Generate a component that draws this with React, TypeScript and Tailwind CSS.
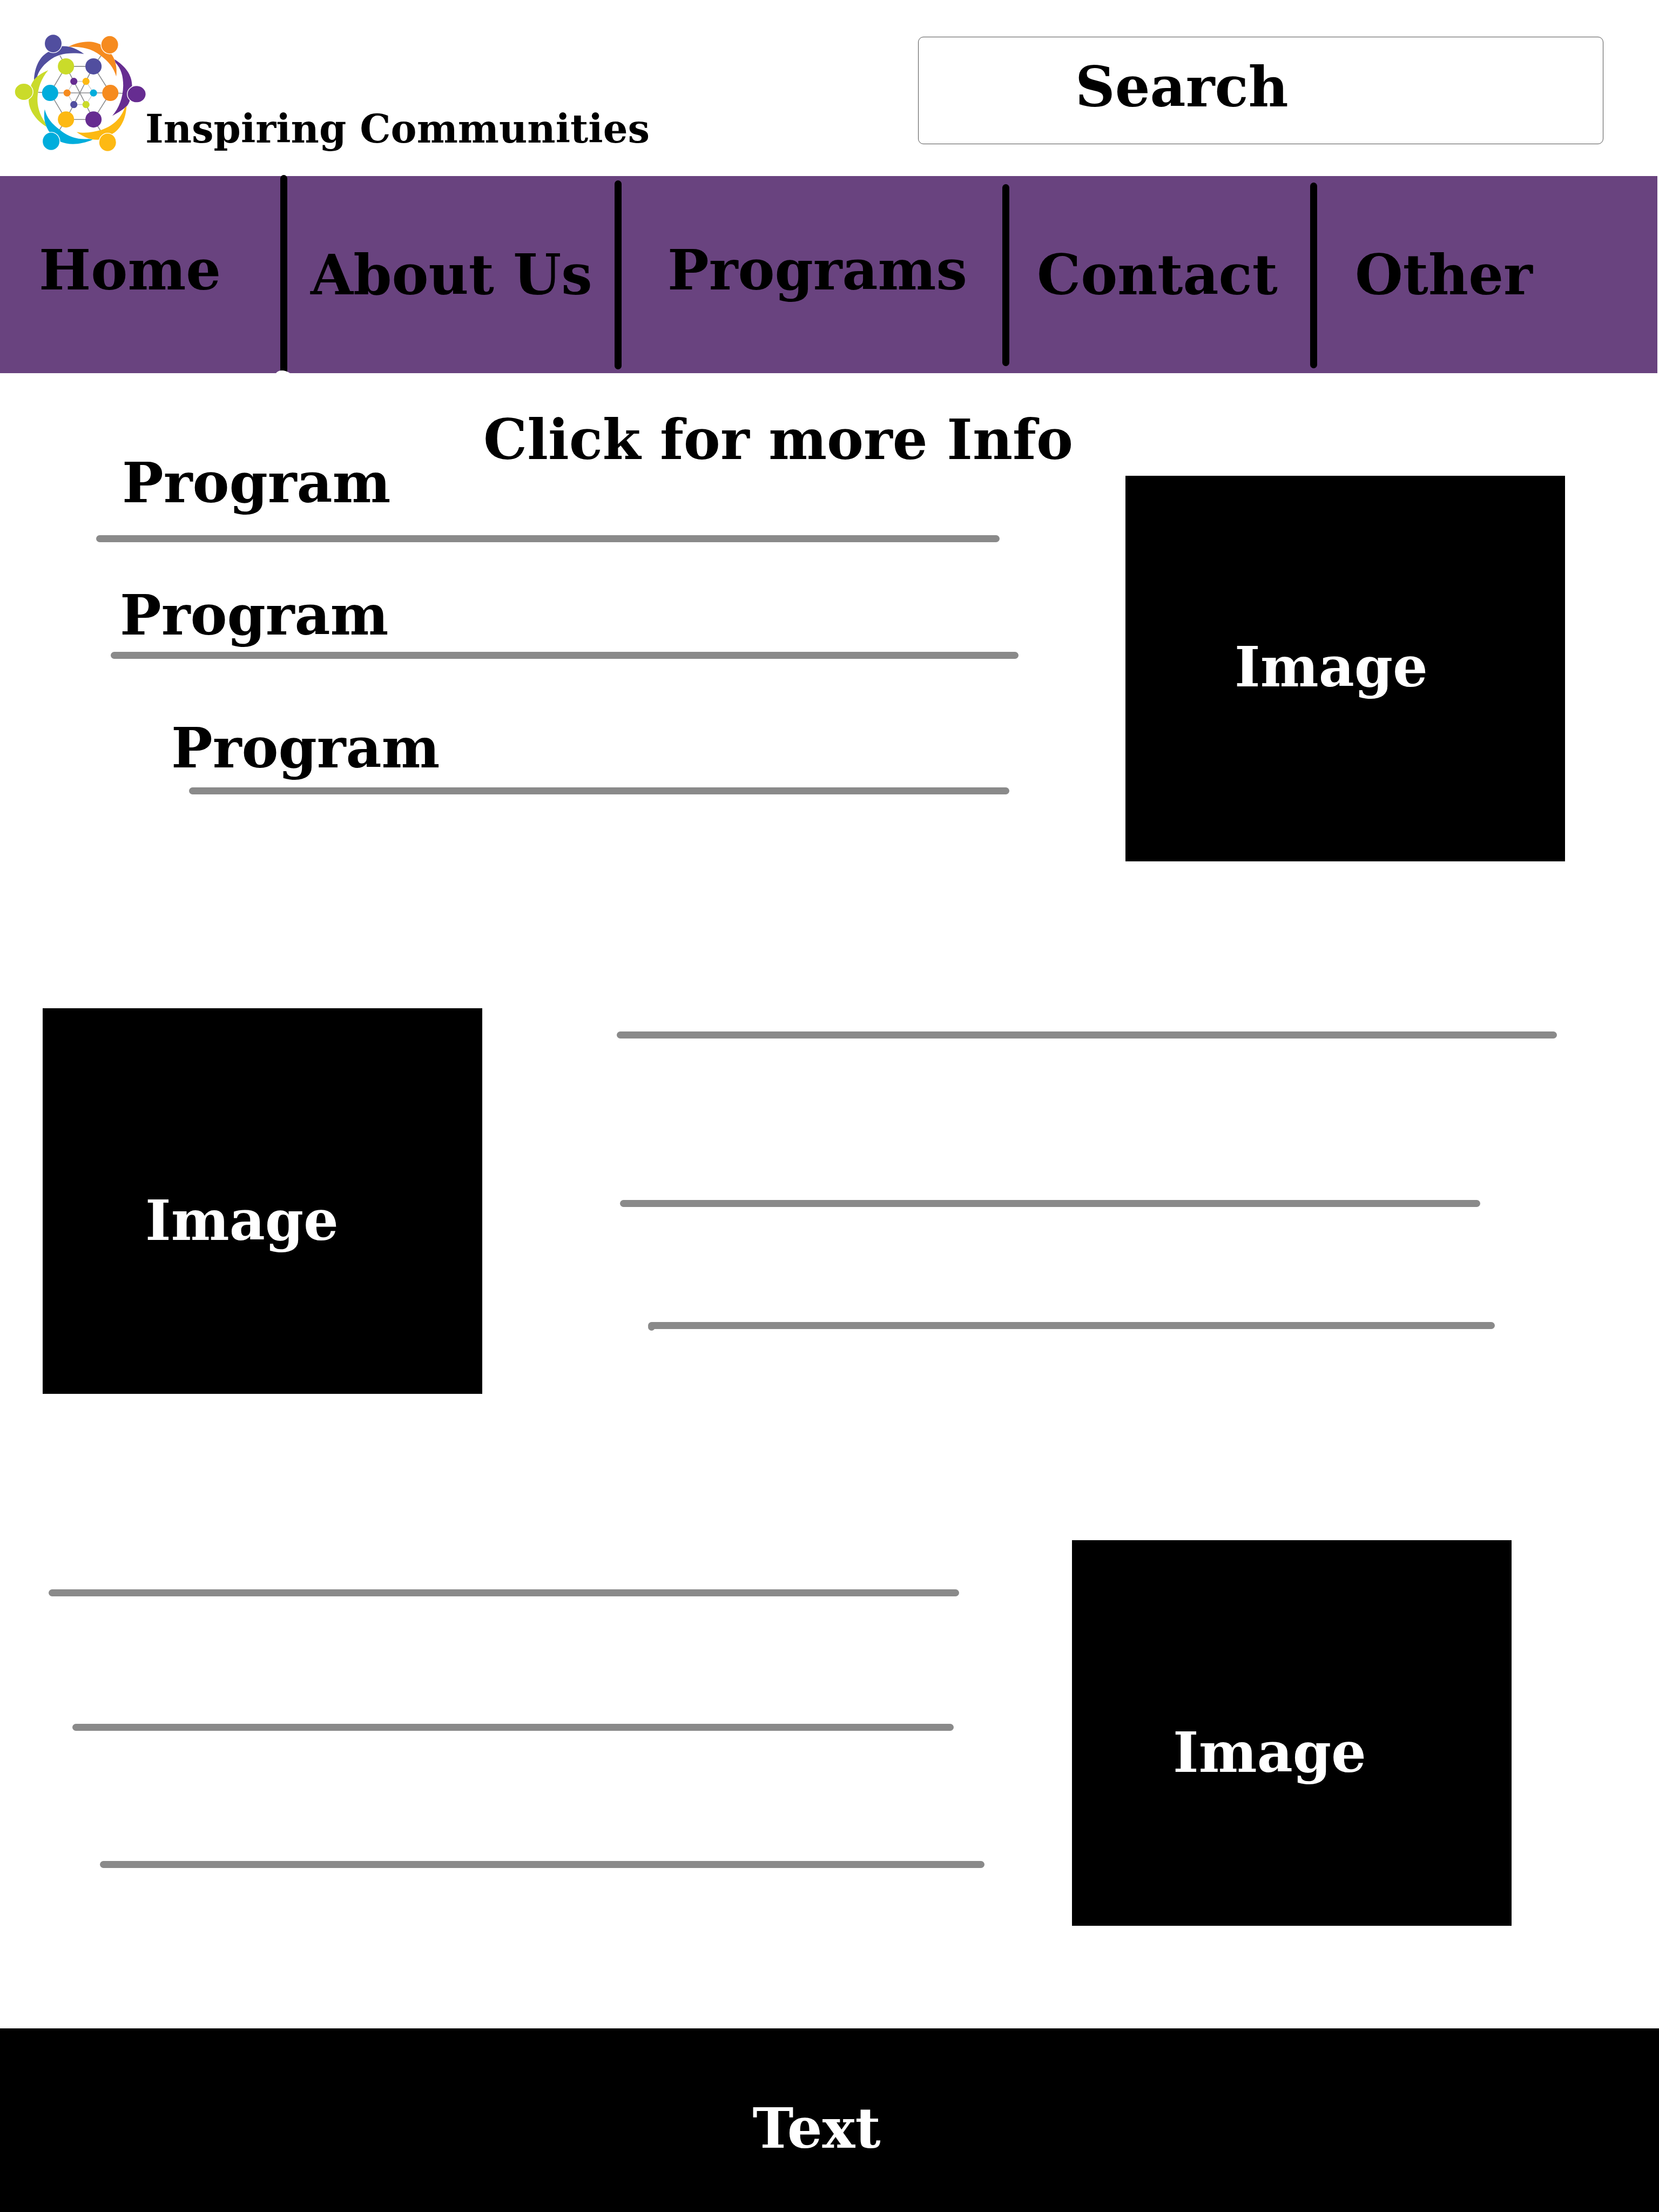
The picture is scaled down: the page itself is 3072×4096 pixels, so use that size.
import React from "react";

const WORD = "text-[102px] leading-none font-bold whitespace-nowrap";

const INDIGO = "#514e9f";
const ORANGE = "#f68b1f";
const PURPLE = "#662c91";
const AMBER = "#fdb913";
const CYAN = "#00addc";
const LIME = "#cadb2a";

function Logo() {
  return (
    <svg
      viewBox="110 120 1090 980"
      className="h-[223px] w-[248px] shrink-0"
      role="img"
      aria-label="Inspiring Communities logo"
    >
      <g stroke="#8a8c8e" strokeWidth="7" fill="none">
        <path d="M537 392H761L898 608L761 824H537L408 608Z" />
        <path d="M310 603L408 608H898L1000 611" />
        <path d="M488 304L537 392L650 608L761 824L816 912" />
        <path d="M822 306L761 392L650 608L537 824L484 910" />
        <path strokeWidth="4" stroke="#a9abad" d="M601 514H700L761 608L700 703H601L546 608Z" />
      </g>
      <path fill={ORANGE} d="M556 232C610 205 660 192 716 191C760 191 790 200 822 215C822 260 850 288 905 290C940 335 955 400 946 474C925 400 880 350 820 305C740 240 650 230 556 232Z" />
      <path fill={INDIGO} d="M277 505C280 400 325 305 400 272C440 290 485 270 498 229C560 222 620 245 684 291C560 275 470 290 400 345C340 390 310 440 300 485Z" />
      <path fill={PURPLE} d="M932 334C1020 390 1075 460 1075 552C1040 575 1030 630 1057 668C1050 690 1042 705 1030 718C995 750 955 772 914 795C970 730 1000 650 1003 550C1003 470 985 410 940 362Z" />
      <path fill={LIME} d="M393 423C340 445 295 475 275 505C262 525 254 540 251 554C275 590 270 630 234 661C230 740 290 830 378 884L368 850C320 785 302 710 305 650C308 570 335 490 393 423Z" />
      <path fill={AMBER} d="M1030 714C1025 820 980 910 905 946C870 925 815 945 808 988C740 995 690 970 623 926C700 940 765 925 830 908C930 870 985 810 1014 732Z" />
      <path fill={CYAN} d="M364 741C350 820 370 880 405 930C450 925 490 955 488 1003C560 1035 660 1030 755 988L722 982C640 990 560 970 490 910C420 860 380 810 364 741Z" />
      <g stroke="#fff" strokeWidth="6">
        <ellipse cx="433" cy="206" rx="71" ry="75" fill={INDIGO} />
        <ellipse cx="893" cy="216" rx="71" ry="74" fill={ORANGE} />
        <ellipse cx="1112" cy="618" rx="76" ry="69" fill={PURPLE} />
        <ellipse cx="194" cy="599" rx="75" ry="69" fill={LIME} />
        <ellipse cx="876" cy="1010" rx="71" ry="74" fill={AMBER} />
        <ellipse cx="416" cy="1002" rx="71" ry="74" fill={CYAN} />
      </g>
      <circle cx="537" cy="392" r="66" fill={LIME} />
      <circle cx="761" cy="392" r="66" fill={INDIGO} />
      <circle cx="898" cy="608" r="66" fill={ORANGE} />
      <circle cx="761" cy="824" r="66" fill={PURPLE} />
      <circle cx="537" cy="824" r="66" fill={AMBER} />
      <circle cx="408" cy="608" r="66" fill={CYAN} />
      <circle cx="601" cy="514" r="29" fill={PURPLE} />
      <circle cx="700" cy="514" r="29" fill={AMBER} />
      <circle cx="761" cy="608" r="29" fill={CYAN} />
      <circle cx="700" cy="703" r="29" fill={LIME} />
      <circle cx="601" cy="703" r="29" fill={INDIGO} />
      <circle cx="546" cy="608" r="29" fill={ORANGE} />
    </svg>
  );
}

function Bar({ className = "" }: { className?: string }) {
  return <div className={`h-[13px] rounded-full bg-[#8a8a8a] ${className}`} />;
}

function ImageBox({ className }: { className: string }) {
  return (
    <div
      className={`h-[714px] w-[814px] shrink-0 bg-black text-white ${WORD} ${className}`}
    >
      Image
    </div>
  );
}

export default function App() {
  return (
    <div className="flex min-h-screen flex-col bg-white font-['DejaVu_Serif',serif] text-black">
      <header className="flex h-[326px] items-start justify-between pr-[103px] pl-[25px]">
        <div className="flex pt-[61px]">
          <Logo />
          <div className="-ml-1 pt-[142px] text-[72px] leading-none font-bold whitespace-nowrap">
            Inspiring Communities
          </div>
        </div>
        <input
          type="search"
          aria-label="Search"
          placeholder="Search"
          className="mt-[68px] h-[199px] w-[1269px] rounded-[10px] border border-[#525252] bg-white pb-[14px] pl-[290px] text-[102px] leading-none font-bold text-black placeholder:text-black placeholder:opacity-100"
        />
      </header>

      <nav className="mr-[3px] grid h-[365px] grid-cols-[519fr_13px_606fr_13px_705fr_13px_557fr_13px_630fr] bg-[#69437f]">
        <a href="#home" className={`pt-[123px] pl-[72px] ${WORD}`}>Home</a>
        <div className="relative -mt-0.5 rounded-t-full bg-black">
          <svg viewBox="0 0 26 5" className="absolute bottom-0 -left-2 h-[5px] w-[26px]" aria-hidden="true">
            <path d="M0 5Q4 0 11 0Q18 0 26 5Z" fill="#fff" />
          </svg>
        </div>
        <a href="#about" className={`pt-[132px] pl-[43px] ${WORD}`}>About Us</a>
        <div className="mt-2 mb-[7px] rounded-full bg-black" />
        <a href="#programs" className={`pt-[123px] pl-[85px] ${WORD}`}>Programs</a>
        <div className="mt-[15px] mb-[13px] rounded-full bg-black" />
        <a href="#contact" className={`pt-[132px] pl-[51px] ${WORD}`}>Contact</a>
        <div className="mt-3 mb-[9px] rounded-full bg-black" />
        <a href="#other" className={`pt-[132px] pl-[70px] ${WORD}`}>Other</a>
      </nav>

      <main className="flex-1">
        <section className="flex">
          <div className="flex-1 pt-[72px]">
            <div className="flex">
              <h2 className={`w-[895px] pt-20 pl-[226px] ${WORD}`}>Program</h2>
              <h1 className={WORD}>Click for more Info</h1>
            </div>
            <Bar className="mt-[46px] mr-[233px] ml-[178px]" />
            <h2 className={`mt-[84px] pl-[222px] ${WORD}`}>Program</h2>
            <Bar className="mt-[17px] mr-[198px] ml-[205px]" />
            <h2 className={`mt-[114px] pl-[317px] ${WORD}`}>Program</h2>
            <Bar className="mt-[22px] mr-[215px] ml-[350px]" />
          </div>
          <ImageBox className="mt-[190px] mr-[174px] pt-[303px] pl-[202px]" />
        </section>

        <section className="flex pt-[272px]">
          <ImageBox className="ml-[79px] pt-[342px] pl-[190px]" />
          <div className="flex-1 pt-[43px]">
            <Bar className="mr-[189px] ml-[249px]" />
            <Bar className="mt-[299px] mr-[331px] ml-[255px]" />
            <div className="relative mt-[213px] mr-[304px] ml-[307px]">
              <Bar />
              <div className="absolute top-[3px] left-0 size-[13px] rounded-full bg-[#8a8a8a]" />
            </div>
          </div>
        </section>

        <section className="flex pt-[271px] pb-[190px]">
          <div className="flex-1 pt-[91px]">
            <Bar className="mr-[209px] ml-[90px]" />
            <Bar className="mt-[236px] mr-[219px] ml-[134px]" />
            <Bar className="mt-[241px] mr-[162px] ml-[185px]" />
          </div>
          <ImageBox className="mr-[273px] pt-[342px] pl-[187px]" />
        </section>
      </main>

      <footer className={`bg-black pt-[134px] pr-12 pb-[104px] text-center text-white ${WORD}`}>
        Text
      </footer>
    </div>
  );
}
